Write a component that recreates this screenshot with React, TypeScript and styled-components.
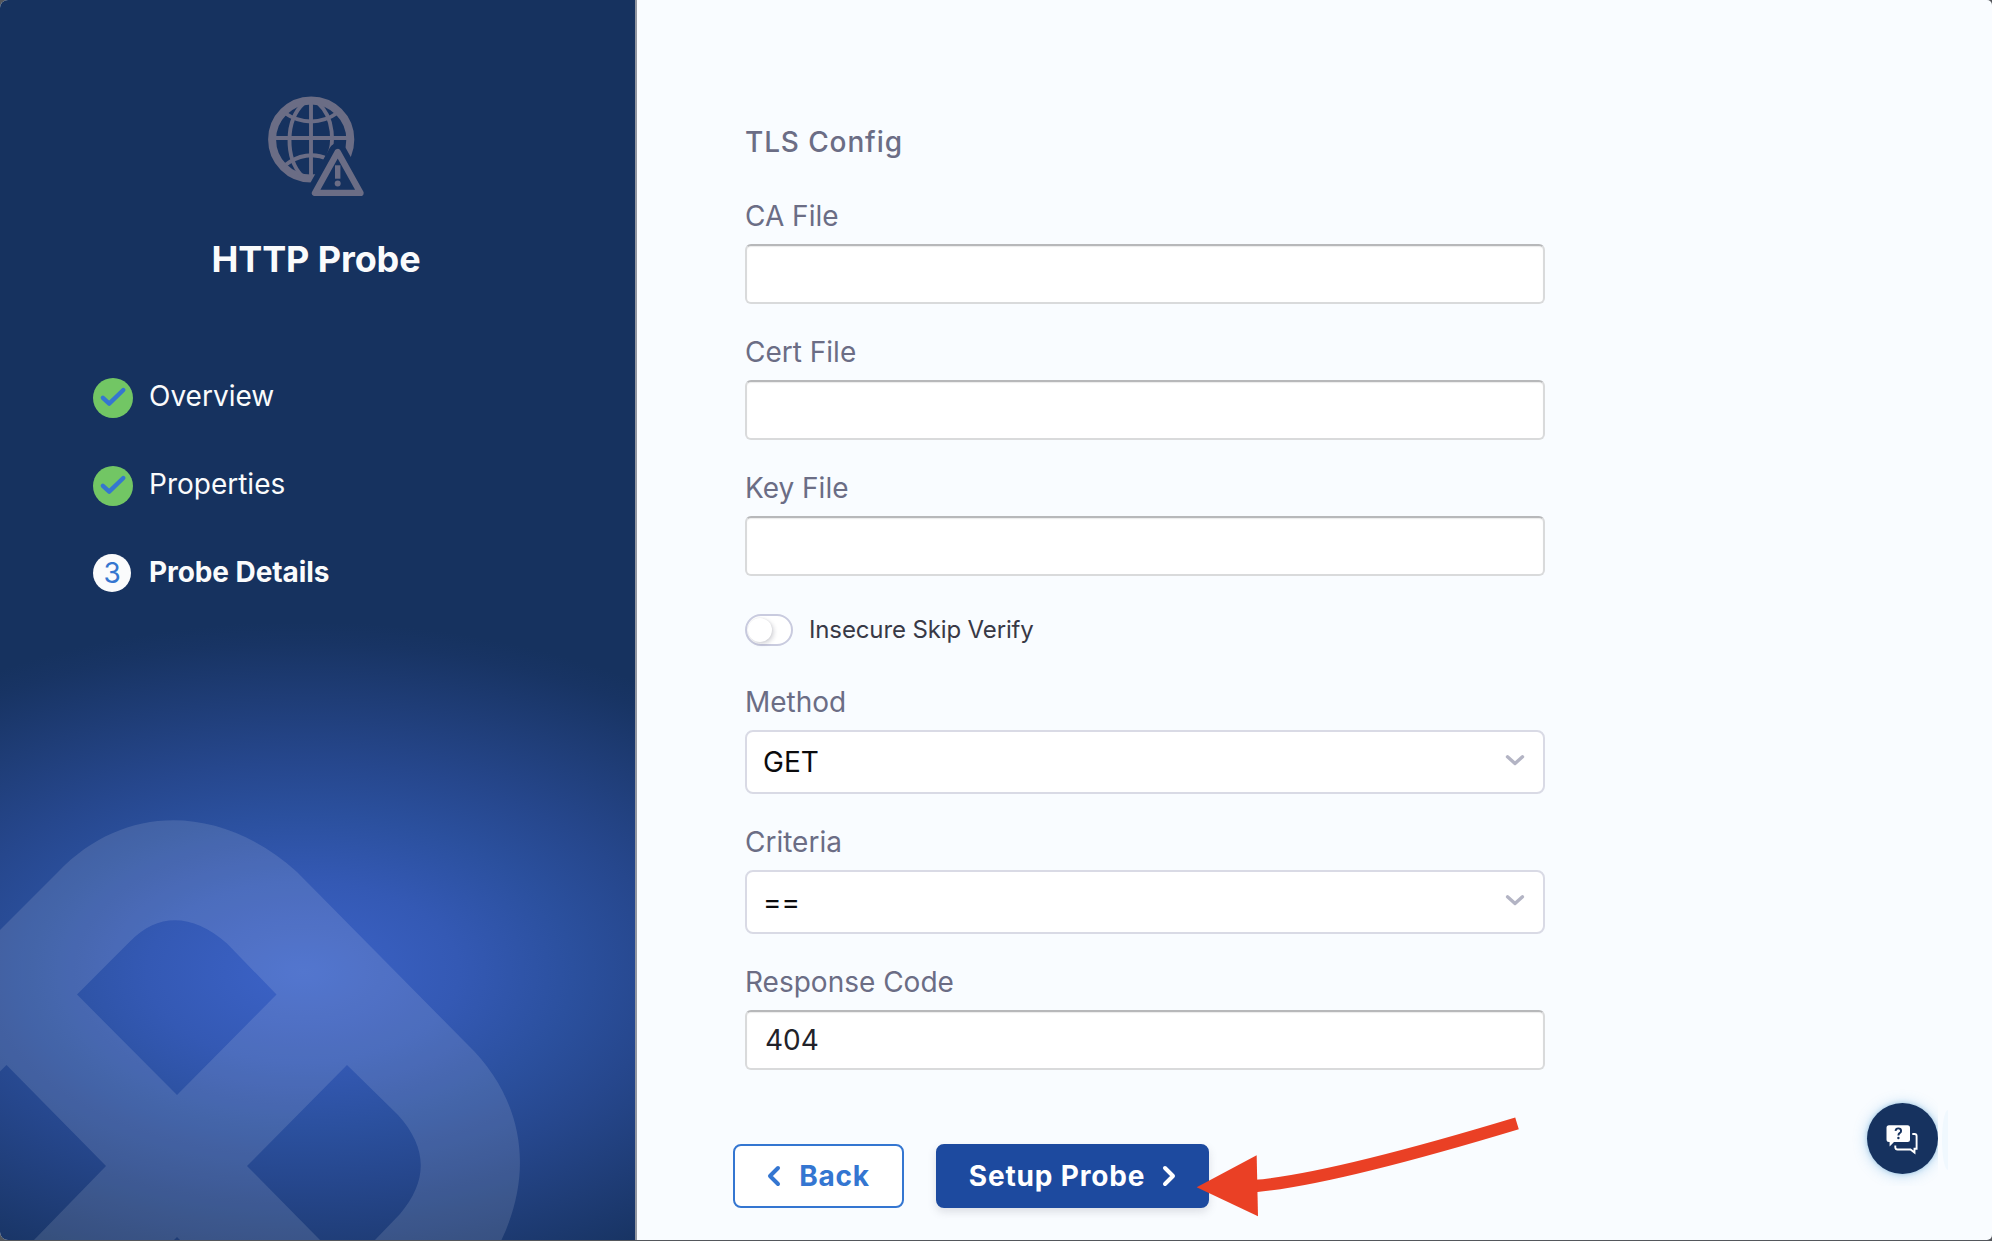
import React from 'react';
import styled, { createGlobalStyle } from 'styled-components';

const GlobalStyle = createGlobalStyle`
  * { box-sizing: border-box; }
  body {
    margin: 0;
    background: #54575c;
    font-family: Inter, "Liberation Sans", sans-serif;
    overflow: hidden;
  }
`;

const Frame = styled.div`
  position: relative;
  display: flex;
  width: 1992px;
  height: 1240px;
  overflow: hidden;
  border-radius: 8px 5px 5px 8px;
  background: #f9fcff;
`;

const Sidebar = styled.aside`
  position: relative;
  display: flex;
  flex-direction: column;
  align-items: center;
  width: 637px;
  height: 100%;
  padding-top: 96px;
  border-right: 2px solid #9296a0;
  background: radial-gradient(
      600px 350px at 303px 972px,
      #3c63c8 0%,
      #3459b4 26%,
      #2b509e 45%,
      #26478d 60%,
      #1f3d77 78%,
      #183464 94%,
      #16325f 100%
    );
`;

const Backdrop = styled.svg`
  position: absolute;
  left: 0;
  bottom: 0;
`;

const Title = styled.h1`
  margin: 41px 0 97px;
  padding-right: 3px;
  font-size: 36px;
  line-height: 44px;
  font-weight: 700;
  letter-spacing: -0.1px;
  color: #fafbfc;
`;

const Steps = styled.ol`
  display: flex;
  flex-direction: column;
  gap: 48px;
  align-self: stretch;
  margin: 0;
  padding: 0 0 0 93px;
  list-style: none;
`;

const Step = styled.li<{ $active?: boolean }>`
  display: flex;
  align-items: flex-start;
  height: 40px;
  font-size: 28px;
  line-height: 37px;
  color: #fafbfc;
  font-weight: ${(p) => (p.$active ? 700 : 400)};
  letter-spacing: ${(p) => (p.$active ? '-0.08px' : '0')};
`;

const StepMark = styled.span<{ $done?: boolean }>`
  display: flex;
  align-items: center;
  justify-content: center;
  width: ${(p) => (p.$done ? 40 : 38)}px;
  height: ${(p) => (p.$done ? 40 : 38)}px;
  margin-right: ${(p) => (p.$done ? 16 : 18)}px;
  border-radius: 50%;
  background: ${(p) => (p.$done ? '#72c664' : '#fafbfc')};
  color: #3576d0;
  font-weight: 400;
`;

const Main = styled.main`
  display: flex;
  flex-direction: column;
  width: 908px;
  padding: 125px 0 0 108px;
`;

const Heading = styled.h2`
  margin: 0 0 40px;
  font-size: 28px;
  line-height: 34px;
  font-weight: 500;
  letter-spacing: 0.88px;
  color: #6b6d85;
`;

const Field = styled.label`
  display: flex;
  flex-direction: column;
  gap: 11px;
  margin-bottom: 31px;
  font-size: 28px;
  line-height: 34px;
  color: #6b6d85;
`;

const Input = styled.input`
  height: 60px;
  padding: 0 18px;
  border: 2px solid #d9dadb;
  border-top-color: #b7b8ba;
  border-radius: 6px;
  background: #fff;
  box-shadow: inset 0 1px 1px rgba(0, 0, 0, 0.08);
  font: inherit;
  color: #22222a;
  outline: none;
`;

const Select = styled.div`
  display: flex;
  align-items: center;
  justify-content: space-between;
  height: 64px;
  padding: 0 18px 0 16px;
  border: 2px solid #d9dae5;
  border-radius: 8px;
  background: #fff;
  color: #0b0b0d;
`;

const ToggleRow = styled.div`
  display: flex;
  align-items: center;
  gap: 16px;
  height: 32px;
  margin: 7px 0 39px;
  font-size: 24px;
  line-height: 30px;
  letter-spacing: -0.13px;
  color: #383946;
  span { padding-bottom: 1px; }
`;

const Switch = styled.div`
  width: 48px;
  height: 32px;
  padding: 2px 1px;
  border: 2px solid #c9cbdf;
  border-radius: 16px;
  background: #fff;
  &::after {
    content: '';
    display: block;
    width: 24px;
    height: 24px;
    border-radius: 50%;
    background: #fff;
    box-shadow: 2px 2px 4px rgba(40, 41, 61, 0.18), 0 0 2px rgba(40, 41, 61, 0.1);
  }
`;

const Actions = styled.div`
  display: flex;
  gap: 32px;
  margin: 43px 0 0 -12px;
`;

const Button = styled.button<{ $primary?: boolean }>`
  display: flex;
  align-items: center;
  justify-content: center;
  gap: ${(p) => (p.$primary ? 17 : 18)}px;
  width: ${(p) => (p.$primary ? 273 : 171)}px;
  height: 64px;
  padding: 0;
  border: 2px solid ${(p) => (p.$primary ? '#1d4a9f' : '#3476d1')};
  border-radius: 8px;
  background: ${(p) => (p.$primary ? '#1d4a9f' : '#fff')};
  color: ${(p) => (p.$primary ? '#fff' : '#3476d1')};
  box-shadow: ${(p) => (p.$primary ? '0 4px 8px rgba(96, 97, 112, 0.18)' : 'none')};
  font: 700 28px/34px Inter, "Liberation Sans", sans-serif;
  letter-spacing: ${(p) => (p.$primary ? 0.84 : 0.7)}px;
`;

const Arrow = styled.svg`
  position: absolute;
  left: 1180px;
  top: 1080px;
`;

const HelpClip = styled.div`
  position: absolute;
  left: 1850px;
  top: 1088px;
  width: 88px;
  height: 98px;
  padding: 15px 0 0 17px;
  overflow: hidden;
`;

const HelpButton = styled.div`
  width: 71px;
  height: 71px;
  border-radius: 50%;
  background: #16325f;
  box-shadow: 0 0 4px rgba(96, 160, 200, 0.45), 0 1px 14px rgba(60, 150, 215, 0.36);
`;

const GlowSliver = styled.div`
  position: absolute;
  left: 1942px;
  top: 1110px;
  width: 6px;
  height: 60px;
  border-radius: 6px 0 0 6px / 30px 0 0 30px;
  background: #f0f8fe;
`;

const IconSlot = styled.div`
  width: 96px;
  height: 100px;
  margin-right: 3px;
`;

const ProbeIcon = () => (
  <svg width="96" height="100" viewBox="0 0 96 100" fill="none" stroke="#6b6d85">
    <mask id="globe-cut" maskUnits="userSpaceOnUse" x="0" y="0" width="96" height="100">
      <rect width="96" height="100" fill="#fff" stroke="none" />
      <path d="M69.7 56L47 97H92.5Z" fill="#000" stroke="#000" strokeWidth="18" strokeLinejoin="round" />
    </mask>
    <g mask="url(#globe-cut)">
      <circle cx="43.2" cy="43.5" r="39.1" strokeWidth="8" />
      <path d="M43 6V82M6 42H80" strokeWidth="3.9" />
      <path d="M36 7C17 24 17 62 34 80M50 7C67 22 66 50 60 60" strokeWidth="3.9" />
      <path d="M16 16.5C33 28.5 53 28.5 70 16.5M16 70C30 58.5 46 56.5 60 63" strokeWidth="3.9" />
    </g>
    <path d="M69.7 56L47 97H92.5Z" strokeWidth="6.4" strokeLinejoin="round" />
    <rect x="67" y="69.3" width="5.4" height="13.4" fill="#6b6d85" stroke="none" />
    <circle cx="69.7" cy="87.4" r="3" fill="#6b6d85" stroke="none" />
  </svg>
);

const Check = () => (
  <svg width="40" height="40" viewBox="0 0 40 40" fill="none">
    <path d="M9.9 19.8L16.2 25.6L30.3 12" stroke="#3576d0" strokeWidth="4.4" strokeLinecap="round" strokeLinejoin="round" />
  </svg>
);

const CaretIcon = styled.svg`
  margin-bottom: 4px;
`;

const Caret = () => (
  <CaretIcon width="20" height="12" viewBox="0 0 20 12" fill="none">
    <path d="M2.5 2.8L10 9.5L17.5 2.8" stroke="#b3b4c4" strokeWidth="3.4" strokeLinecap="round" strokeLinejoin="round" />
  </CaretIcon>
);

const Chevron = ({ right }: { right?: boolean }) => (
  <svg width="14" height="22" viewBox="0 0 14 22" fill="none">
    <path d={right ? 'M3 3L11 11L3 19' : 'M11 3L3 11L11 19'} stroke="currentColor" strokeWidth="4" strokeLinecap="round" strokeLinejoin="round" />
  </svg>
);

const HelpIcon = () => (
  <svg width="71" height="71" viewBox="0 0 71 71">
    <path d="M22 22.3H40.5Q43 22.3 43 24.8V36.5Q43 39 40.5 39H27L22.6 43.5V39H22Q19.5 39 19.5 36.5V24.8Q19.5 22.3 22 22.3Z" fill="#fff" />
    <path d="M45.3 31H47.5Q49.6 31 49.6 33V45.8H47.5V49.5L43.5 46.5H30.5Q28.5 46.5 28.3 44.5V42.5" fill="none" stroke="#fff" strokeWidth="1.9" />
    <path d="M28.5 27.9Q28.8 25.4 31.3 25.4Q34.1 25.4 34.1 27.9Q34.1 29.2 32.6 30.1Q31.4 30.9 31.4 32.4" fill="none" stroke="#16325f" strokeWidth="1.9" />
    <circle cx="31.4" cy="35" r="1.2" fill="#16325f" />
  </svg>
);

const App = () => (
  <>
    <GlobalStyle />
    <Frame>
      <Sidebar>
        <Backdrop width="635" height="440" viewBox="0 800 635 440" fill="#fff" fillOpacity="0.12">
          <path
            fillRule="evenodd"
            d="M0 930L58 872C124 803 220 803 297 872L467 1044C523 1098 535 1170 501 1241H374L400 1214C428 1181 428 1148 398 1115L347 1065L247 1166L321 1241H181L177 1237L173 1241H33L106 1166L6.5 1065L0 1071.5Z
            M77 994.5L130 941.5C158 913 192 913 227 943.5L276.5 994.5L177 1095Z"
          />
        </Backdrop>
        <IconSlot><ProbeIcon /></IconSlot>
        <Title>HTTP Probe</Title>
        <Steps>
          <Step><StepMark $done><Check /></StepMark>Overview</Step>
          <Step><StepMark $done><Check /></StepMark>Properties</Step>
          <Step $active><StepMark>3</StepMark>Probe Details</Step>
        </Steps>
      </Sidebar>
      <Main>
        <Heading>TLS Config</Heading>
        <Field>CA File<Input /></Field>
        <Field>Cert File<Input /></Field>
        <Field>Key File<Input /></Field>
        <ToggleRow><Switch /><span>Insecure Skip Verify</span></ToggleRow>
        <Field>Method<Select>GET<Caret /></Select></Field>
        <Field>Criteria<Select>==<Caret /></Select></Field>
        <Field>Response Code<Input defaultValue="404" /></Field>
        <Actions>
          <Button><Chevron />Back</Button>
          <Button $primary>Setup Probe<Chevron right /></Button>
        </Actions>
      </Main>
      <Arrow width="360" height="150" viewBox="0 0 1080 450">
        <path d="M225 318Q455 298 1011 130" fill="none" stroke="#ea4025" strokeWidth="37" />
        <path d="M50 322L230 226L234 409Z" fill="#ea4025" />
      </Arrow>
      <HelpClip><HelpButton><HelpIcon /></HelpButton></HelpClip>
      <GlowSliver />
    </Frame>
  </>
);

export default App;
